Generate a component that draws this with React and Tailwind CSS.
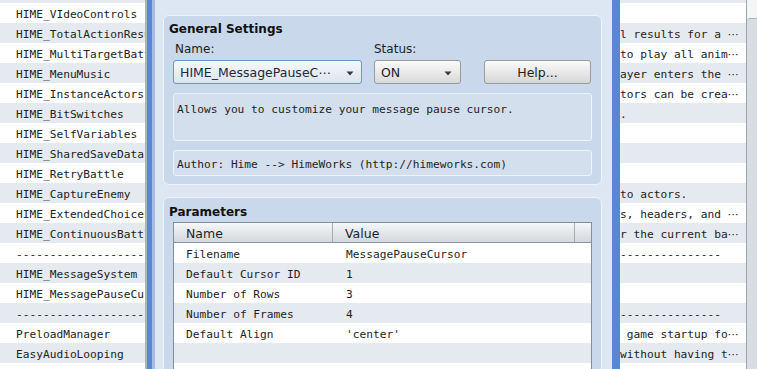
import React from "react";

const rows = [
  ["HIME_VIdeoControls", ""],
  ["HIME_TotalActionResults", "l results for a ⋯"],
  ["HIME_MultiTargetBattleAnimations", "to play all anim⋯"],
  ["HIME_MenuMusic", "ayer enters the ⋯"],
  ["HIME_InstanceActors", "tors can be crea⋯"],
  ["HIME_BitSwitches", "."],
  ["HIME_SelfVariables", ""],
  ["HIME_SharedSaveData", ""],
  ["HIME_RetryBattle", ""],
  ["HIME_CaptureEnemy", "to actors."],
  ["HIME_ExtendedChoiceList", "s, headers, and ⋯"],
  ["HIME_ContinuousBattles", "r the current ba⋯"],
  ["------------------------------", "---------------"],
  ["HIME_MessageSystem", ""],
  ["HIME_MessagePauseCursor", ""],
  ["------------------------------", "---------------"],
  ["PreloadManager", " game startup fo⋯"],
  ["EasyAudioLooping", "without having t⋯"],
  ["AudioStreaming", "e streamed from ⋯"],
];

const params = [
  ["Filename", "MessagePauseCursor"],
  ["Default Cursor ID", "1"],
  ["Number of Rows", "3"],
  ["Number of Frames", "4"],
  ["Default Align", "'center'"],
  ["", ""],
  ["", ""],
];

function Arrow() {
  return (
    <svg width="8" height="5" viewBox="0 0 8 5" className="shrink-0">
      <path d="M0.5 0.5 L7.5 0.5 L4 4.5 Z" fill="#3a3a3a" />
    </svg>
  );
}

function Desc({ text }) {
  if (text.endsWith("⋯")) {
    return (
      <>
        {text.slice(0, -1)}
        <span className="font-['DejaVu_Sans',sans-serif] text-[11px]">⋯</span>
      </>
    );
  }
  return text;
}

export default function App() {
  return (
    <div className="relative h-[369px] w-[757px] overflow-hidden bg-white font-['DejaVu_Sans_Mono',monospace] text-[11.2px] text-[#222]">
      {/* background plugin list */}
      <div className="flex">
        <div className="w-[746px]">
          <div className="h-[3px] bg-[#e5eaf0]" />
          {rows.map((r, i) => (
            <div
              key={i}
              className={
                i % 2 === 0
                  ? "flex h-[20px] items-center bg-white pt-[4px]"
                  : "flex h-[20px] items-center bg-[#e5eaf0] pt-[4px]"
              }
            >
              <div className="w-[620px] overflow-hidden whitespace-pre pl-4">{r[0]}</div>
              <div className="w-[126px] overflow-hidden whitespace-pre">
                <Desc text={r[1]} />
              </div>
            </div>
          ))}
        </div>
        <div className="flex h-[369px] w-[11px] flex-col border-l border-[#9ba5af]">
          <div className="h-[18px] bg-[#f3f5f7]" />
          <div className="flex-1 rounded-tl-[3px] border-t border-[#aab2ba] bg-[#d7dde3]" />
        </div>
      </div>

      {/* dialog */}
      <div className="absolute left-[145px] top-0 h-[369px] w-[475px] border-l-2 border-[#a9b5c5] bg-[#5b86d4] pl-[5px] pr-[8px] font-['DejaVu_Sans',sans-serif] text-[12px] text-[#1e1e1e]">
        <div className="h-full border-l-[3px] border-[#a3bde6] bg-[#dde7f3] pl-[8px] pr-[10px] pt-[15px]">
          {/* General Settings */}
          <div className="h-[170px] rounded-[6px] border border-[#eef4fa] bg-[#c9d8ea] px-[9px]">
            <div className="-ml-[4px] pt-[5px] text-[12px] font-bold leading-[16px] text-[#111]">
              General Settings
            </div>
            <div className="mt-[5px] flex items-end">
              <div className="flex w-[189px] flex-col">
                <div className="pl-[2px] leading-[14px]">Name:</div>
                <div className="mt-[4px] flex h-[24px] items-center justify-between rounded-[3px] border border-[#6f93cc] bg-gradient-to-b from-[#f5f8fb] to-[#dce4ed] pl-[6px] pr-[7px] pt-[2px] text-[12.5px] text-[#1a2a3a]">
                  <span>HIME_MessagePauseC⋯</span>
                  <Arrow />
                </div>
              </div>
              <div className="ml-[12px] flex w-[87px] flex-col">
                <div className="leading-[14px]">Status:</div>
                <div className="mt-[4px] flex h-[24px] items-center justify-between rounded-[3px] border border-[#9a9a9a] bg-gradient-to-b from-[#fbfbfb] to-[#d9d9d9] pl-[6px] pr-[8px] pt-[2px] text-[12.5px]">
                  <span>ON</span>
                  <Arrow />
                </div>
              </div>
              <div className="ml-[23px] flex h-[24px] w-[107px] items-center justify-center rounded-[3px] border border-[#9a9a9a] bg-gradient-to-b from-[#fbfbfb] to-[#d6d6d6] pt-[2px] text-[12.5px]">
                Help...
              </div>
            </div>
            <div className="mt-[9px] h-[48px] rounded-[3px] border border-[#eef3f9] bg-[#d3dfec] px-[3px] pt-[9px] font-['DejaVu_Sans_Mono',monospace] text-[11.2px] leading-[14px]">
              Allows you to customize your message pause cursor.
            </div>
            <div className="mt-[9px] flex h-[26px] items-center rounded-[3px] border border-[#eef3f9] bg-[#d3dfec] px-[3px] pt-[4px] font-['DejaVu_Sans_Mono',monospace] text-[11.2px]">
              Author: Hime --&gt; HimeWorks (http://himeworks.com)
            </div>
          </div>

          {/* Parameters */}
          <div className="mt-[12px] h-[200px] rounded-[6px] border border-[#eef4fa] bg-[#c9d8ea] px-[9px]">
            <div className="-ml-[4px] pt-[6px] text-[12px] font-bold leading-[16px] text-[#111]">
              Parameters
            </div>
            <div className="mt-[2px] border border-[#858e97] bg-white">
              <div className="flex h-[20px] items-center border-b border-[#8b949d] bg-gradient-to-b from-[#f5f7f9] to-[#d3d8dd] text-[12.5px]">
                <div className="flex h-full w-[159px] items-center border-r border-[#a4acb4] pl-[12px] pt-[4px]">Name</div>
                <div className="flex h-full w-[242px] items-center border-r border-[#a4acb4] pl-[12px] pt-[4px]">Value</div>
                <div className="flex-1" />
              </div>
              {params.map((p, i) => (
                <div
                  key={i}
                  className={
                    i % 2 === 0
                      ? "flex h-[20px] items-center bg-white pt-[4px] font-['DejaVu_Sans_Mono',monospace] text-[11.2px]"
                      : "flex h-[20px] items-center bg-[#e5eaf0] pt-[4px] font-['DejaVu_Sans_Mono',monospace] text-[11.2px]"
                  }
                >
                  <div className="w-[159px] whitespace-pre pl-[12px]">{p[0]}</div>
                  <div className="whitespace-pre pl-[13px]">{p[1]}</div>
                </div>
              ))}
            </div>
          </div>
        </div>
      </div>
    </div>
  );
}
